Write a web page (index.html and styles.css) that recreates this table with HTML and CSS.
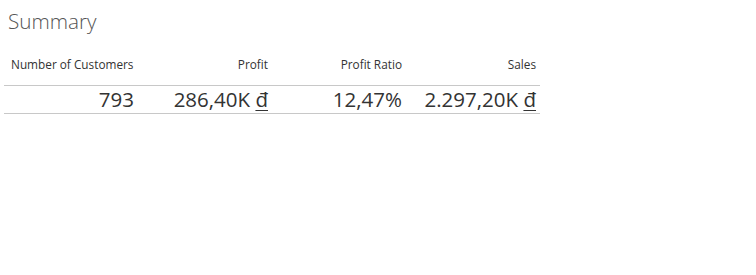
FILE: index.html
```html
<!DOCTYPE html>
<html>
<head>
<meta charset="utf-8">
<link rel="stylesheet" href="styles.css">
</head>
<body>
<div class="page">
  <h1 class="title">Summary</h1>
  <div class="table">
    <div class="row head">
      <div class="cell">Number of Customers</div>
      <div class="cell">Profit</div>
      <div class="cell">Profit Ratio</div>
      <div class="cell">Sales</div>
    </div>
    <div class="row values">
      <div class="cell">793</div>
      <div class="cell">286,40K <span class="cur">đ</span></div>
      <div class="cell">12,47%</div>
      <div class="cell">2.297,20K <span class="cur">đ</span></div>
    </div>
  </div>
</div>
</body>
</html>
```
FILE: styles.css
```css
* { box-sizing: border-box; }
html, body { margin: 0; padding: 0; background: #fff; }
.page { padding: 0 0 0 4px; font-family: "Open Sans", "Liberation Sans", sans-serif; }
.title {
  margin: 0;
  padding: 7px 0 0 4px;
  height: 48px;
  font-size: 20.7px;
  font-weight: 300;
  color: #555;
  line-height: 28px;
}
.table { width: 536px; }
.row { display: grid; grid-template-columns: repeat(4, 134px); }
.cell { text-align: right; padding-right: 4px; white-space: nowrap; }
.head .cell { font-size: 11.8px; color: #333; height: 37px; line-height: 32px; }
.head .cell:first-child { text-align: left; padding-left: 7px; }
.values { border-top: 1px solid #c8c8c8; border-bottom: 1px solid #c8c8c8; }
.values .cell { font-size: 20.5px; color: #333; line-height: 27px; }
.cur { text-decoration: underline; text-underline-offset: 3px; text-decoration-thickness: 1px; }
```
